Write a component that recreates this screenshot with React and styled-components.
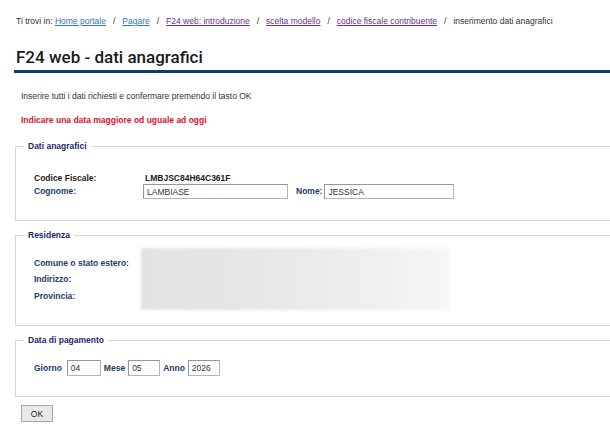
import styled, { createGlobalStyle } from 'styled-components'

const GlobalStyle = createGlobalStyle`
  body {
    margin: 0;
    background: #fff;
    overflow: hidden;
    font-family: "Liberation Sans", Arial, sans-serif;
    font-size: 8.5px;
    color: #333;
  }
`;

const Page = styled.div`
  padding: 16px 0 0 15px;
  width: 620px;
`;

const Breadcrumb = styled.div`
  line-height: 11px;
  color: #333;
  padding-left: 1px;
`;

const Crumb = styled.a`
  color: ${p => (p.$visited ? '#6a2d8f' : '#2f74c0')};
  text-decoration: underline;
`;

const Sep = styled.span`
  margin: 0 7px;
`;

const Title = styled.h1`
  margin: 20px 0 0 -1px;
  padding: 0 0 3px 2px;
  font-family: Roboto, "Liberation Sans", sans-serif;
  font-weight: 500;
  font-size: 17px;
  line-height: 20px;
  color: #1a1a1a;
  border-bottom: 3px solid #0d3b73;
`;

const Intro = styled.p`
  margin: 18px 0 0 6px;
  line-height: 11px;
`;

const Warning = styled.p`
  margin: 13px 0 0 6px;
  line-height: 11px;
  font-weight: bold;
  color: #d3132c;
`;

const Fieldset = styled.fieldset`
  margin: ${p => p.$gap}px 0 0 0;
  padding: ${p => p.$pt}px 0 ${p => p.$pb}px 18px;
  border: 1px solid #d6d6d6;
  border-right: none;
  min-width: 0;
`;

const Legend = styled.legend`
  margin-left: -10px;
  padding: 0 4px;
  line-height: 11px;
  font-weight: bold;
  color: #1c2a6b;
`;

const PersonGrid = styled.div`
  display: grid;
  grid-template-columns: 109px auto;
  align-items: center;
`;

const Label = styled.span`
  font-weight: bold;
  color: ${p => (p.$dark ? '#222' : '#1b3a6c')};
  line-height: ${p => p.$lh || 11}px;
`;

const Value = styled.span`
  font-weight: bold;
  color: #222;
  line-height: 11px;
  padding-left: 2px;
`;

const InlineRow = styled.div`
  display: flex;
  align-items: center;
`;

const Input = styled.input`
  box-sizing: border-box;
  width: ${p => p.$w}px;
  height: ${p => p.$h || 15}px;
  margin: 0 ${p => p.$mr || 0}px 0 ${p => p.$ml || 0}px;
  padding: 0 3px;
  border: 1px solid #b4b4b4;
  border-top-color: #969696;
  border-left-color: #969696;
  background: #fff;
  font-family: "Liberation Sans", Arial, sans-serif;
  font-size: 8.5px;
  color: #333;
  outline: none;
`;

const ResidenceRow = styled.div`
  display: flex;
  align-items: center;
`;

const ResidenceLabels = styled.div`
  width: 107px;
  display: flex;
  flex-direction: column;
  padding-top: 1px;
`;

const Redacted = styled.div`
  width: 308px;
  height: 62px;
  background: linear-gradient(90deg, #e2e2e2 0%, #e4e4e4 25%, #e9e9e9 50%, #efefef 75%, #f6f6f6 100%);
  filter: blur(1.5px);
`;

const OkButton = styled.button`
  box-sizing: border-box;
  margin: 8px 0 0 6px;
  width: 32px;
  height: 17px;
  padding: 0;
  border: 1px solid #a7a7a7;
  background: #e9e9e9;
  font-family: "Liberation Sans", Arial, sans-serif;
  font-size: 8.5px;
  color: #222;
`;

export default function App() {
  return (
    <>
      <GlobalStyle />
      <Page>
        <Breadcrumb>
          Ti trovi in: <Crumb>Home portale</Crumb>
          <Sep>/</Sep>
          <Crumb>Pagare</Crumb>
          <Sep>/</Sep>
          <Crumb $visited>F24 web: introduzione</Crumb>
          <Sep>/</Sep>
          <Crumb $visited>scelta modello</Crumb>
          <Sep>/</Sep>
          <Crumb $visited>codice fiscale contribuente</Crumb>
          <Sep>/</Sep>
          inserimento dati anagrafici
        </Breadcrumb>

        <Title>F24 web - dati anagrafici</Title>

        <Intro>Inserire tutti i dati richiesti e confermare premendo il tasto OK</Intro>
        <Warning>Indicare una data maggiore od uguale ad oggi</Warning>

        <Fieldset $gap={15} $pt={21} $pb={21}>
          <Legend>Dati anagrafici</Legend>
          <PersonGrid>
            <Label $dark>Codice Fiscale:</Label>
            <Value>LMBJSC84H64C361F</Value>
            <Label>Cognome:</Label>
            <InlineRow>
              <Input $w={145} $mr={8} defaultValue="LAMBIASE" />
              <Label>Nome:</Label>
              <Input $w={130} $ml={2} defaultValue="JESSICA" />
            </InlineRow>
          </PersonGrid>
        </Fieldset>

        <Fieldset $gap={9} $pt={7} $pb={15}>
          <Legend>Residenza</Legend>
          <ResidenceRow>
            <ResidenceLabels>
              <Label $lh={16.5}>Comune o stato estero:</Label>
              <Label $lh={16.5}>Indirizzo:</Label>
              <Label $lh={16.5}>Provincia:</Label>
            </ResidenceLabels>
            <Redacted />
          </ResidenceRow>
        </Fieldset>

        <Fieldset $gap={9} $pt={14} $pb={20}>
          <Legend>Data di pagamento</Legend>
          <InlineRow>
            <Label>Giorno</Label>
            <Input $w={34} $h={16} $ml={5} $mr={3} defaultValue="04" />
            <Label>Mese</Label>
            <Input $w={32} $h={16} $ml={3} $mr={3} defaultValue="05" />
            <Label>Anno</Label>
            <Input $w={32} $h={16} $ml={3} defaultValue="2026" />
          </InlineRow>
        </Fieldset>

        <OkButton>OK</OkButton>
      </Page>
    </>
  );
}
